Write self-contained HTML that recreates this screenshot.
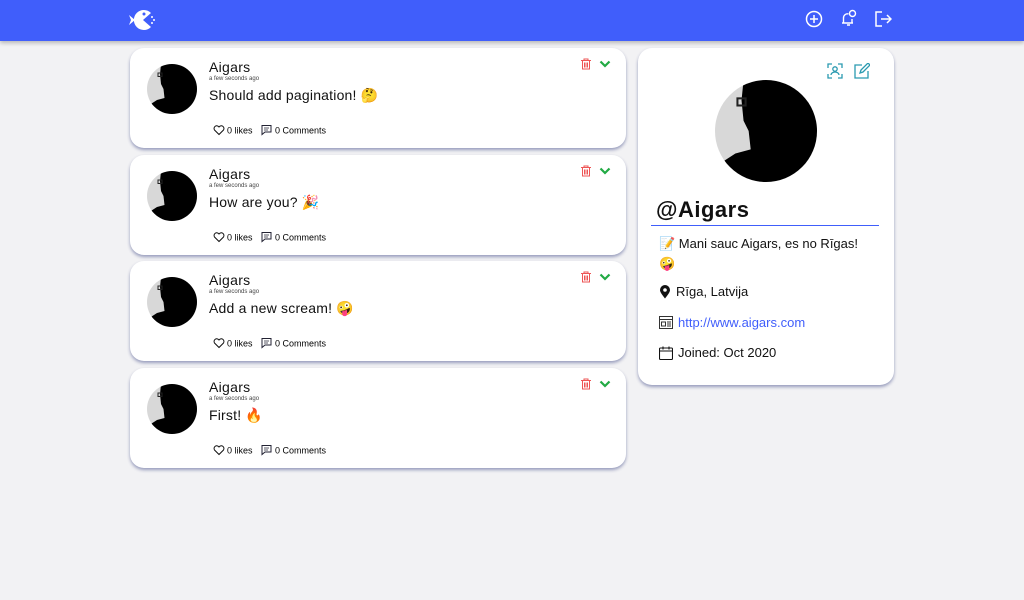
<!DOCTYPE html><html><head><meta charset="utf-8"><style>
*{margin:0;padding:0;box-sizing:border-box}
body{width:1024px;height:600px;background:#f2f2f4;font-family:"Liberation Sans","Noto Sans CJK JP",sans-serif;position:relative;overflow:hidden;color:#111}
.hdr{position:absolute;left:0;top:0;width:1024px;height:41px;background:#405efb;box-shadow:0 2px 4px rgba(0,0,0,.25)}
.card{position:absolute;left:130px;width:496px;height:100px;background:#fff;border-radius:14px;box-shadow:0 2px 3px rgba(40,50,120,.45)}
.name{position:absolute;left:79px;top:11px;font-size:14px;letter-spacing:.3px}
.time{position:absolute;left:79px;top:28px;font-size:6px;color:#444}
.txt{position:absolute;left:79px;top:39px;font-size:14px;letter-spacing:.2px}
.meta{position:absolute;left:83px;top:75px;font-size:9px;display:flex;align-items:center;gap:3px}
.pc{position:absolute;left:638px;top:48px;width:256px;height:337px;background:#fff;border-radius:14px;box-shadow:0 2px 3px rgba(40,50,120,.45)}
.row{position:absolute;left:21px;font-size:13px;display:flex;align-items:center;gap:5px}
</style></head><body>
<svg width="0" height="0" style="position:absolute"><defs>
<symbol id="av" viewBox="0 0 100 100"><clipPath id="cc"><circle cx="50" cy="50" r="50"/></clipPath><g clip-path="url(#cc)"><rect width="100" height="100" fill="#d8d8d8"/><path d="M28 0H100V100H0V85 L20 72 L35 68 L33 50 L28 40 L26 20Z" fill="#000"/><rect x="22" y="18" width="8" height="7" fill="none" stroke="#222" stroke-width="2"/></g></symbol>
<symbol id="trash" viewBox="0 0 12 12"><path d="M1 2.5h10M4 2.5V1h4v1.5M2.5 3v8h7V3M4.5 4.5v5M6 4.5v5M7.5 4.5v5" fill="none" stroke="#e55" stroke-width="1"/></symbol>
<symbol id="chev" viewBox="0 0 12 12"><path d="M1.5 3.5L6 8l4.5-4.5" fill="none" stroke="#2a4" stroke-width="2.2"/></symbol>
<symbol id="meta" viewBox="0 0 140 12"><path d="M6 10.5L1.5 6A2.4 2.4 0 0 1 6 3a2.4 2.4 0 0 1 4.5 3Z" fill="none" stroke="#111" stroke-width="1"/><path d="M49 1.5h9v6.5h-6l-3 2.5Z" fill="none" stroke="#223" stroke-width="1"/><path d="M51 4h5M51 6h4" stroke="#223" stroke-width=".8"/></symbol>
</defs></svg>
<div class="hdr">
<svg style="position:absolute;left:129px;top:8px" width="28" height="24" viewBox="0 0 28 24"><path d="M6 12 L0 7 L2 12 L0 17Z" fill="#fff"/><path d="M22 5 A10 10 0 1 0 22 19 L14 12Z" fill="#fff"/><circle cx="15" cy="6" r="1.5" fill="#405efb"/><circle cx="23" cy="9" r="1" fill="#fff"/><circle cx="25" cy="12" r="1" fill="#fff"/><circle cx="23" cy="15" r="1" fill="#fff"/></svg>
<svg style="position:absolute;left:805px;top:10px" width="18" height="18" viewBox="0 0 18 18" fill="none" stroke="#fff" stroke-width="1.5"><circle cx="9" cy="9" r="7.5"/><path d="M9 5v8M5 9h8"/></svg>
<svg style="position:absolute;left:840px;top:9px" width="18" height="18" viewBox="0 0 18 18" fill="none" stroke="#fff" stroke-width="1.4"><path d="M2 14h11M3.5 14V9a4 4 0 0 1 5-4M12 10v4M7 16h3"/><circle cx="12.5" cy="4.5" r="3"/></svg>
<svg style="position:absolute;left:874px;top:10px" width="18" height="18" viewBox="0 0 18 18" fill="none" stroke="#fff" stroke-width="1.5"><path d="M8 2H2v14h6M7 9h10M13 5l4 4-4 4"/></svg>
</div>

<div class="card" style="top:48px"><svg style="position:absolute;left:17px;top:16px" width="50" height="50"><use href="#av"/></svg><div class="name">Aigars</div><div class="time">a few seconds ago</div><div class="txt">Should add pagination! 🤔</div>
<svg style="position:absolute;left:83px;top:76px" width="140" height="12"><use href="#meta"/><text x="14" y="9.5" font-size="9" font-family="Liberation Sans">0 likes</text><text x="62" y="9.5" font-size="9" font-family="Liberation Sans">0 Comments</text></svg>
<svg style="position:absolute;left:450px;top:10px" width="12" height="12"><use href="#trash"/></svg><svg style="position:absolute;left:469px;top:10px" width="12" height="12"><use href="#chev"/></svg></div>
<div class="card" style="top:155px"><svg style="position:absolute;left:17px;top:16px" width="50" height="50"><use href="#av"/></svg><div class="name">Aigars</div><div class="time">a few seconds ago</div><div class="txt">How are you? 🎉</div>
<svg style="position:absolute;left:83px;top:76px" width="140" height="12"><use href="#meta"/><text x="14" y="9.5" font-size="9" font-family="Liberation Sans">0 likes</text><text x="62" y="9.5" font-size="9" font-family="Liberation Sans">0 Comments</text></svg>
<svg style="position:absolute;left:450px;top:10px" width="12" height="12"><use href="#trash"/></svg><svg style="position:absolute;left:469px;top:10px" width="12" height="12"><use href="#chev"/></svg></div>
<div class="card" style="top:261px"><svg style="position:absolute;left:17px;top:16px" width="50" height="50"><use href="#av"/></svg><div class="name">Aigars</div><div class="time">a few seconds ago</div><div class="txt">Add a new scream! 🤪</div>
<svg style="position:absolute;left:83px;top:76px" width="140" height="12"><use href="#meta"/><text x="14" y="9.5" font-size="9" font-family="Liberation Sans">0 likes</text><text x="62" y="9.5" font-size="9" font-family="Liberation Sans">0 Comments</text></svg>
<svg style="position:absolute;left:450px;top:10px" width="12" height="12"><use href="#trash"/></svg><svg style="position:absolute;left:469px;top:10px" width="12" height="12"><use href="#chev"/></svg></div>
<div class="card" style="top:368px"><svg style="position:absolute;left:17px;top:16px" width="50" height="50"><use href="#av"/></svg><div class="name">Aigars</div><div class="time">a few seconds ago</div><div class="txt">First! 🔥</div>
<svg style="position:absolute;left:83px;top:76px" width="140" height="12"><use href="#meta"/><text x="14" y="9.5" font-size="9" font-family="Liberation Sans">0 likes</text><text x="62" y="9.5" font-size="9" font-family="Liberation Sans">0 Comments</text></svg>
<svg style="position:absolute;left:450px;top:10px" width="12" height="12"><use href="#trash"/></svg><svg style="position:absolute;left:469px;top:10px" width="12" height="12"><use href="#chev"/></svg></div>

<div class="pc">
<svg style="position:absolute;left:189px;top:15px" width="16" height="16" viewBox="0 0 16 16" fill="none" stroke="#2a9ab0" stroke-width="1.3"><path d="M1 5V1h4M11 1h4v4M15 11v4h-4M5 15H1v-4"/><circle cx="8" cy="6" r="2.2"/><path d="M4 12a4 3 0 0 1 8 0"/></svg>
<svg style="position:absolute;left:216px;top:15px" width="16" height="16" viewBox="0 0 16 16" fill="none" stroke="#2a9ab0" stroke-width="1.3"><path d="M8 2H1v13h13V8M6 10l1-3 7-7 2 2-7 7z"/></svg>
<svg style="position:absolute;left:77px;top:32px" width="102" height="102"><use href="#av"/></svg>
<div style="position:absolute;left:18px;top:149px;font-size:22px;font-weight:bold;letter-spacing:.5px">@Aigars</div>
<div style="position:absolute;left:13px;top:177px;width:228px;height:1px;background:#405efb"></div>
<div class="row" style="top:186px;width:215px;display:block;line-height:20px">📝 Mani sauc Aigars, es no Rīgas! 🤪</div>
<div class="row" style="top:236px"><svg width="12" height="14" viewBox="0 0 12 14"><path d="M6 13.5C2 8.5 1 6.5 1 5a5 5 0 0 1 10 0c0 1.5-1 3.5-5 8.5Z" fill="#111"/><circle cx="6" cy="5" r="1.8" fill="#fff"/></svg>Rīga, Latvija</div>
<div class="row" style="top:267px"><svg width="14" height="13" viewBox="0 0 14 13" fill="none" stroke="#333" stroke-width="1"><rect x=".5" y=".5" width="13" height="12"/><path d="M.5 3.5h13M2.5 6h4v4h-4zM8 6h4M8 8h4M8 10h4"/></svg><span style="color:#405efb">http://www.aigars.com</span></div>
<div class="row" style="top:297px"><svg width="14" height="14" viewBox="0 0 14 14" fill="none" stroke="#111" stroke-width="1.1"><rect x=".5" y="2" width="13" height="11.5" rx="1"/><path d="M.5 5h13M4 .5v3M10 .5v3"/></svg>Joined: Oct 2020</div>
</div>
</body></html>
